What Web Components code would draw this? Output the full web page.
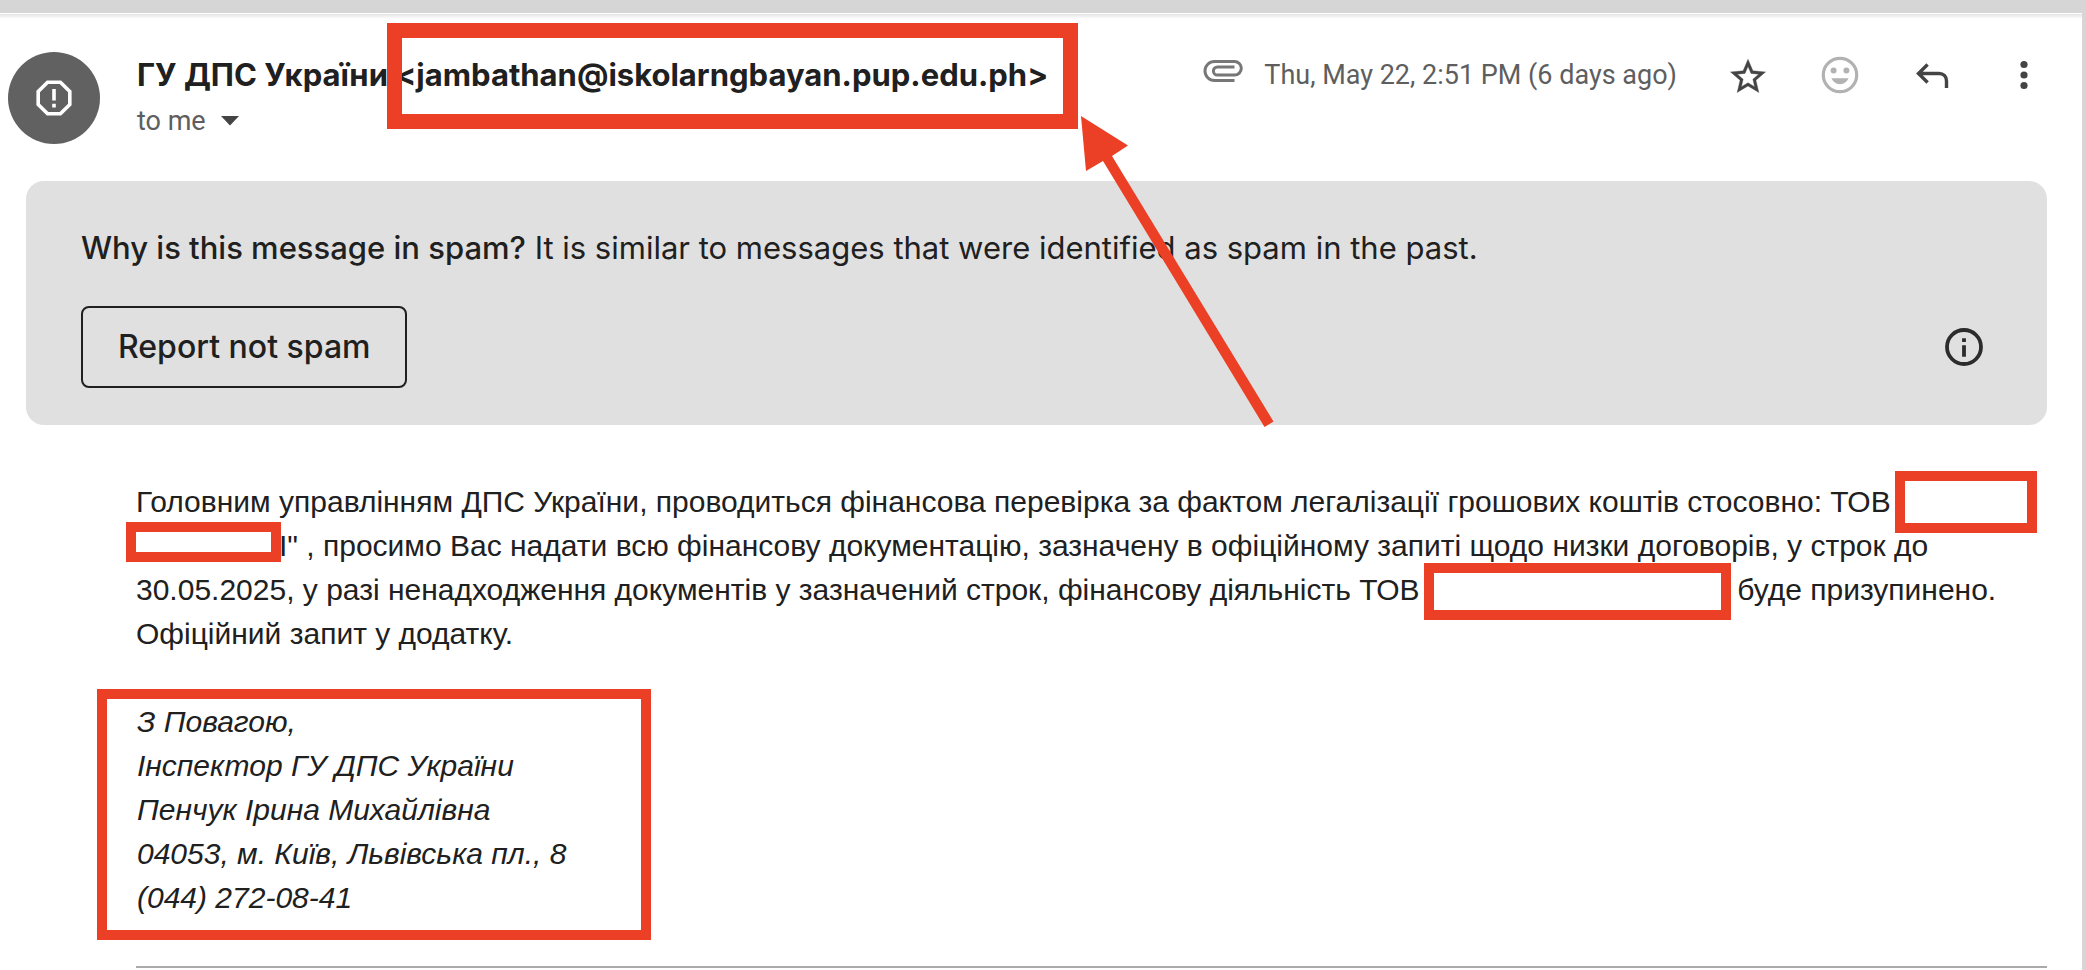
<!DOCTYPE html>
<html lang="uk">
<head>
<meta charset="utf-8">
<title>ГУ ДПС України</title>
<style>
  body {
    margin: 0;
    background: #d6d6d6;
    color: #202020;
    font-family: Inter, "Liberation Sans", sans-serif;
  }
</style>
</head>
<body>
<mail-view>
  <message-header>
    <span slot="name">ГУ ДПС України</span>
    <span slot="address">&lt;jambathan@iskolarngbayan.pup.edu.ph&gt;</span>
    <span slot="recipient">to me</span>
    <time slot="date" datetime="2025-05-22T14:51">Thu, May 22, 2:51 PM (6 days ago)</time>
  </message-header>
  <spam-banner>
    <strong slot="title">Why is this message in spam?</strong>
    <span slot="reason">It is similar to messages that were identified as spam in the past.</span>
    <span slot="action">Report not spam</span>
  </spam-banner>
  <message-body>
    <p>Головним управлінням ДПС України, проводиться фінансова перевірка за фактом легалізації грошових коштів стосовно: ТОВ <redacted-box size="tall"></redacted-box> <redacted-box size="low"></redacted-box>І" , просимо Вас надати всю фінансову документацію, зазначену в офіційному запиті щодо низки договорів, у строк до<br>30.05.2025, у разі ненадходження документів у зазначений строк, фінансову діяльність ТОВ <redacted-box size="wide"></redacted-box> буде призупинено.<br>Офіційний запит у додатку.</p>
    <message-signature slot="signature">З Повагою,<br>Інспектор ГУ ДПС України<br>Пенчук Ірина Михайлівна<br>04053, м. Київ, Львівська пл., 8<br>(044) 272-08-41</message-signature>
  </message-body>
</mail-view>

<script>
  const define = (name, html) => {
    const template = document.createElement('template');
    template.innerHTML = html;
    customElements.define(name, class extends HTMLElement {
      constructor() {
        super();
        this.attachShadow({ mode: 'open' }).append(template.content.cloneNode(true));
      }
    });
  };

  define('mail-view', `
    <style>
      :host { display: block; box-sizing: border-box; min-height: 100vh; padding: 13px 4px 0 0; }
      main {
        box-sizing: border-box;
        min-height: calc(100vh - 13px);
        background: #fff linear-gradient(#fff 0 1px, #e4e4e4 1px, #fff 6px) no-repeat;
      }
    </style>
    <main><slot></slot></main>`);

  /* Toolbar button that centres the icon passed to it. */
  define('icon-button', `
    <style>
      :host { display: block; }
      button {
        display: grid; place-items: center;
        width: 48px; height: 46px;
        margin: 0; padding: 0; border: 0; background: none; color: inherit; cursor: pointer;
      }
    </style>
    <button><slot></slot></button>`);

  define('message-avatar', `
    <style>
      :host {
        display: grid; place-items: center; flex: none;
        width: 92px; height: 92px; border-radius: 50%; background: #616161;
      }
    </style>
    <svg width="36" height="36" viewBox="0 0 36 36" fill="none" stroke="#fff" aria-hidden="true">
      <path d="M11.6 2.2h12.8l9.4 9.4v12.8l-9.4 9.4H11.6l-9.4-9.4V11.6z" stroke-width="3.6"/>
      <path d="M18 9v11.5M18 23.8v3.6" stroke-width="3.6"/>
    </svg>`);

  /* Red frame around its content, with an arrow pointing at the corner. */
  define('marked-address', `
    <style>
      :host { display: inline-block; position: relative; }
      .frame { position: absolute; inset: -29px -30px -31px -8px; border: 15px solid #eb4025; }
      svg { position: absolute; left: 100%; top: 100%; margin: 18px 0 0 33px; z-index: 1; }
    </style>
    <slot></slot>
    <span class="frame"></span>
    <svg width="194" height="312" viewBox="0 0 194 312" fill="#eb4025" aria-hidden="true">
      <path d="M0 0L47 29.5 31 40 192.5 305.5 183.5 311 22 45 5 55z"/>
    </svg>`);

  define('message-header', `
    <style>
      :host { display: flex; align-items: flex-start; gap: 37px; padding: 39px 34px 37px 8px; }
      .sender { flex: 1; min-width: 0; }
      h2 { margin: 0; font-size: 31px; font-weight: 700; line-height: 46px; white-space: nowrap; }
      .to {
        display: flex; align-items: center; gap: 15px;
        margin: 0; padding: 0; border: 0; background: none; cursor: pointer;
        font: 27px/46px Roboto, sans-serif; color: #5e5e5e;
      }
      .meta { display: flex; align-items: center; color: #444; }
      .date { margin: 0 47px 0 21px; font: 27px/46px Roboto, sans-serif; color: #5e5e5e; white-space: nowrap; }
      .actions { display: flex; gap: 44px; }
      .clip { margin-bottom: 8px; }
    </style>
    <message-avatar></message-avatar>
    <div class="sender">
      <h2><slot name="name"></slot> <marked-address><slot name="address"></slot></marked-address></h2>
      <button class="to"><slot name="recipient"></slot>
        <svg width="18" height="10" viewBox="0 0 18 10" aria-hidden="true"><path d="M0 0h18L9 9.5z" fill="#444"/></svg>
      </button>
    </div>
    <div class="meta">
      <svg class="clip" width="40" height="24" viewBox="0 0 40 24" fill="none" stroke="#777" stroke-width="3" aria-hidden="true">
        <path d="M31.5 21.5H11.5a9.5 9.5 0 0 1 0-19H31.5a6.8 6.8 0 0 1 0 13.6H14.5a4.1 4.1 0 0 1 0-8.2H31.5"/>
      </svg>
      <span class="date"><slot name="date"></slot></span>
      <div class="actions">
        <icon-button>
          <svg width="42" height="42" viewBox="0 0 24 24" fill="#444" aria-hidden="true"><path transform="translate(0 1)" stroke="#444" stroke-width=".2" d="M22 9.24l-7.19-.62L12 2 9.19 8.63 2 9.24l5.46 4.73L5.82 21 12 17.27 18.18 21l-1.63-7.03L22 9.24zM12 15.4l-3.76 2.27 1-4.28-3.32-2.88 4.38-.38L12 6.1l1.71 4.04 4.38.38-3.32 2.88 1 4.28L12 15.4z"/></svg>
        </icon-button>
        <icon-button>
          <svg width="42" height="42" viewBox="0 0 42 42" fill="#b2b2b2" aria-hidden="true">
            <circle cx="21" cy="21" r="16.7" fill="none" stroke="#b2b2b2" stroke-width="3.2"/>
            <circle cx="14.6" cy="16.5" r="3"/><circle cx="27.4" cy="16.5" r="3"/>
            <path d="M12.5 24.3h17c-1.6 3.7-4.7 5.9-8.5 5.9s-6.9-2.2-8.5-5.9z"/>
          </svg>
        </icon-button>
        <icon-button>
          <svg width="42" height="42" viewBox="0 0 42 42" fill="none" stroke="#444" stroke-width="3.4" aria-hidden="true">
            <path d="M16.6 10.5L7.5 19.5l9.1 9M7.500 19.5H28c4.5 0 7.5 3 7.5 7.5V34"/>
          </svg>
        </icon-button>
        <icon-button>
          <svg width="42" height="42" viewBox="0 0 42 42" fill="#444" aria-hidden="true">
            <circle cx="21" cy="10.5" r="3.6"/><circle cx="21" cy="21" r="3.6"/><circle cx="21" cy="31.5" r="3.6"/>
          </svg>
        </icon-button>
      </div>
    </div>`);

  define('spam-banner', `
    <style>
      :host {
        display: block; margin: 0 35px 0 26px; padding: 45px 64px 37px 55px;
        border-radius: 18px; background: #e0e0e0;
      }
      p { margin: 0 0 36px; font-size: 31px; line-height: 44px; }
      ::slotted(strong) { font-weight: 500; }
      .row { display: flex; align-items: center; justify-content: space-between; }
      .report {
        height: 82px; margin: 0; padding: 0 35px;
        border: 2px solid #202020; border-radius: 8px; background: none; cursor: pointer;
        font: 500 32px/44px Inter, sans-serif; color: #202020;
      }
      .info { display: block; margin: 0; padding: 0; border: 0; background: none; cursor: pointer; }
      .info svg { display: block; }
    </style>
    <p><slot name="title"></slot> <slot name="reason"></slot></p>
    <div class="row">
      <button class="report"><slot name="action"></slot></button>
      <button class="info">
        <svg width="38" height="38" viewBox="0 0 38 38" fill="none" stroke="#2c2c2c" stroke-width="3.8" aria-hidden="true">
          <circle cx="19" cy="19" r="17"/><path d="M19 10.2v3.800M19 17.2v11.6"/>
        </svg>
      </button>
    </div>`);

  define('redacted-box', `
    <style>
      :host {
        display: inline-block; box-sizing: border-box; vertical-align: top;
        border: 10px solid #eb4025; background: #fff;
      }
      :host([size="tall"]) { width: 142px; height: 62px; margin: -9px 0 -9px -4px; }
      :host([size="low"]) { width: 155px; height: 40px; margin: -2px -2px 0 -10px; }
      :host([size="wide"]) { width: 307px; height: 57px; margin: -5px -2px -8px -4px; }
    </style>`);

  define('message-signature', `
    <style>
      :host {
        display: block; box-sizing: border-box; width: fit-content; min-width: 554px;
        margin: 33px 0 26px -39px; padding: 1px 30px 10px;
        border: 10px solid #eb4025; font-style: italic;
      }
    </style>
    <slot></slot>`);

  define('message-body', `
    <style>
      :host {
        display: block; margin: 55px 35px 0 136px;
        border-bottom: 2px solid #aaa;
        font: 30px/44px "Liberation Sans", Arial, sans-serif;
      }
      ::slotted(p) { margin: 0; }
    </style>
    <slot></slot>
    <slot name="signature"></slot>`);
</script>
</body>
</html>
